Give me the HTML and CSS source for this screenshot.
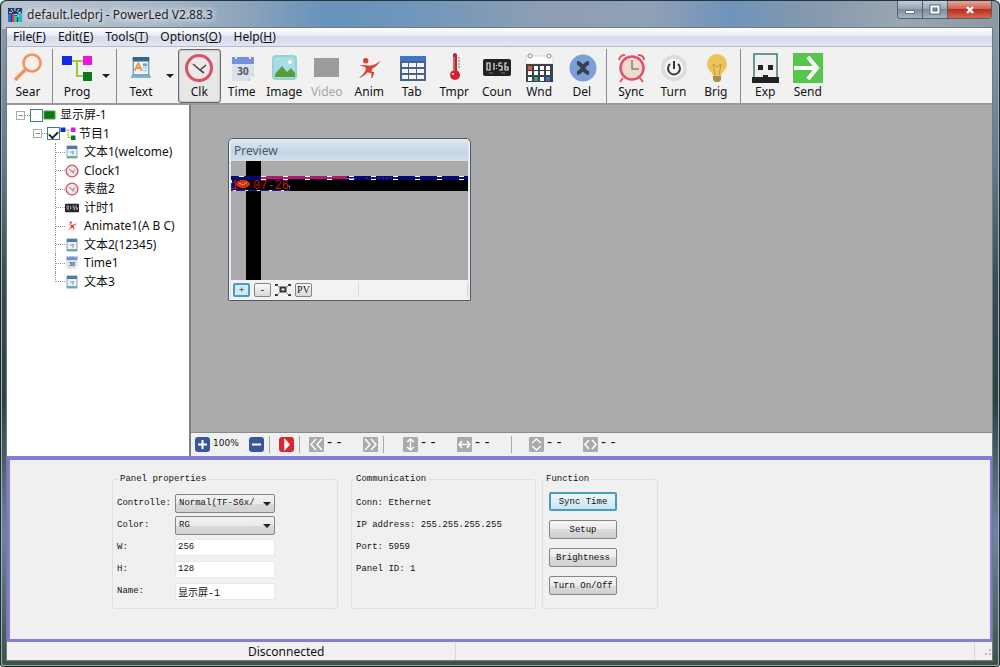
FILE: index.html
```html
<!DOCTYPE html>
<html lang="en">
<head>
<meta charset="utf-8">
<title>default.ledprj - PowerLed V2.88.3</title>
<link rel="stylesheet" href="styles.css">
</head>
<body>
<svg class="defs" aria-hidden="true">
  <symbol id="doc" viewBox="0 0 24 26"><path d="M3 2h18v18l2 4H1l2-4z" fill="#3b78a4"/><path d="M4 6h16v14H4z" fill="#eef6fb"/><path d="M3 1h18v4H3z" fill="#2f6794"/><path d="M2 21h20l1 3H1z" fill="#7fb6d6"/><path d="M5 16l4-8 4 8M7 13h4" fill="none" stroke="#f0963c" stroke-width="2"/><path d="M14 8h5v3h-5z" fill="#6fa6cc"/><path d="M14 13h5M14 16h5" stroke="#88b7d4"/></symbol>
  <symbol id="page" viewBox="0 0 14 14"><path d="M2 1h10v12H2z" fill="#eaf2f6" stroke="#8aa4b8"/><path d="M2 1h10v3H2z" fill="#4a7aae"/><path d="M5 7h4M8 6v4" stroke="#7c9ec8"/><path d="M2 12h10" stroke="#6fae9c" stroke-width="2"/></symbol>
  <symbol id="clock" viewBox="0 0 30 30"><circle cx="15" cy="15" r="12.5" fill="#eee8e8" stroke="#dc5066" stroke-width="3"/><path d="M9 11l7 6 6-5M16 17l4 3" fill="none" stroke="#454b52" stroke-width="1.6"/></symbol>
  <symbol id="calendar" viewBox="0 0 24 26"><path d="M1 1h22v18l-5 6H1z" fill="#dbe0e9"/><path d="M1 1h22v7H1z" fill="#748fdc"/><path d="M5 0v3M19 0v3" stroke="#dfe6ff" stroke-width="2"/><path d="M18 25l1-6h4z" fill="#fff" stroke="#b0b6c0" stroke-width=".6"/><text x="12" y="19" text-anchor="middle" class="cal-text">30</text></symbol>
  <symbol id="counter" viewBox="0 0 28 17"><rect width="28" height="17" rx="2" fill="#202224"/><path d="M4 4h3v7H4zM11 4v7M16 4h3v0M16 4v3h3v4h-3M24 4h-2v7h3V8h-3M13.500 6v1M13.500 9v1" fill="none" stroke="#e8e8e8" stroke-width="1.200"/><path d="M6 14h4M18 14h4" stroke="#777"/></symbol>
  <symbol id="runner" viewBox="0 0 26 26"><circle cx="9" cy="5" r="2.800" fill="#dc4030"/><path d="M2 9l9 1 4 0q5-1 9-5q-2 5-8 8l-1 3 3 1-2 6-1 0 0-5-4-1q-3 4-9 6q5-4 7-8l0-3z" fill="#dc4030"/></symbol>
  <symbol id="prog" viewBox="0 0 30 26"><path d="M10 6h11M15 6v15h6" fill="none" stroke="#a4c83c" stroke-width="2"/><path d="M0 1h10v9H0z" fill="#1428e8"/><path d="M21 1h9v9h-9z" fill="#f014d8"/><path d="M21 17h9v9h-9z" fill="#0a7a18"/></symbol>
</svg>
<div class="window">
  <header class="titlebar">
    <svg class="app-icon" viewBox="0 0 14 14"><path fill="#1e3c64" d="M0 0h14v14H0z"/><path d="M3 1l2 3M7 0v3M11 1L9 4M1 4l3 1M13 4l-3 1" stroke="#cfe4ff"/><path fill="#2e6ae0" d="M0 6h3v8H0z"/><path fill="#d93a54" d="M4 6h2v8H4z"/><path fill="#3dc46a" d="M6 8h3v6H6z"/><path fill="#27b7d2" d="M10 5h4v9h-4z"/><path d="M6 7q4-2 4 2" fill="none" stroke="#fff"/></svg>
    <h1 class="title">default.ledprj - PowerLed V2.88.3</h1>
    <div class="win-buttons">
      <button class="win-btn" aria-label="Minimize"><svg width="12" height="12" viewBox="0 0 12 12"><path d="M1.500 6.500h9v3h-9z" fill="#fff" stroke="#687888"/></svg></button>
      <button class="win-btn" aria-label="Maximize"><svg width="12" height="12" viewBox="0 0 12 12"><path d="M2.500 2.500h7v6h-7z" fill="none" stroke="#5a6878" stroke-width="4"/><path d="M2.500 2.500h7v6h-7z" fill="none" stroke="#fff" stroke-width="2"/></svg></button>
      <button class="win-btn close" aria-label="Close"><svg width="12" height="12" viewBox="0 0 12 12"><path d="M3 3l6 6M9 3L3 9" stroke="#fff" stroke-width="2.400"/></svg></button>
    </div>
  </header>
  <div class="client">
    <nav class="menubar">
      <button class="menu">File(<u>F</u>)</button><button class="menu">Edit(<u>E</u>)</button><button class="menu">Tools(<u>T</u>)</button><button class="menu">Options(<u>O</u>)</button><button class="menu">Help(<u>H</u>)</button>
    </nav>
    <div class="toolbar">
      <div class="group g1">
        <button class="tool"><svg viewBox="0 0 30 30"><circle cx="19" cy="10" r="8.500" fill="#f6f0ec" stroke="#f2925e" stroke-width="2.600"/><path d="M13 16L2 27" stroke="#f2925e" stroke-width="3.400"/></svg>Sear</button>
      </div>
      <span class="sep"></span>
      <div class="group g1">
        <button class="tool"><svg viewBox="0 0 30 30"><use href="#prog" y="2" width="30" height="26"/></svg>Prog</button>
      </div>
      <button class="drop" aria-label="Prog options"></button>
      <span class="sep"></span>
      <div class="group g1">
        <button class="tool"><svg viewBox="0 0 30 30"><use href="#doc" x="4" y="2" width="22" height="26"/></svg>Text</button>
      </div>
      <button class="drop wide" aria-label="Text options"></button>
      <div class="group g10">
        <button class="tool active"><svg viewBox="0 0 30 30"><use href="#clock" width="30" height="30"/></svg>Clk</button>
        <button class="tool"><svg viewBox="0 0 30 30"><use href="#calendar" x="4" y="3" width="24" height="26"/></svg>Time</button>
        <button class="tool"><svg viewBox="0 0 30 30"><rect x="4" y="3" width="23" height="23" rx="3" fill="#a8dde8" stroke="#8fd6cc" stroke-width="2"/><circle cx="21" cy="9" r="2" fill="#fff"/><path d="M6 24v-3l7-8 5 6 4-4 4 5v4z" fill="#5c9b3c"/></svg>Image</button>
        <button class="tool" disabled><svg viewBox="0 0 30 30"><path fill="#9c9c9c" d="M2 5h25v19H2z"/></svg>Video</button>
        <button class="tool"><svg viewBox="0 0 30 30"><use href="#runner" x="3" y="3" width="25" height="25"/></svg>Anim</button>
        <button class="tool"><svg viewBox="0 0 30 30"><path fill="#4c6088" d="M3 3h26v25H3z"/><path fill="#3e74cc" d="M3 3h26v5H3z"/><path fill="#f4f6fa" d="M5 10h6v4H5zM12 10h7v4h-7zM20 10h7v4h-7zM5 16h6v4H5zM12 16h7v4h-7zM20 16h7v4h-7zM5 22h6v4H5zM12 22h7v4h-7zM20 22h7v4h-7z"/></svg>Tab</button>
        <button class="tool"><svg viewBox="0 0 30 30"><path d="M16 2v20" stroke="#bd2432" stroke-width="4" stroke-linecap="round"/><circle cx="16" cy="22" r="5" fill="#d62030"/><path d="M15 4v14" stroke="#f79a98"/><path d="M19 5h2M19 8h2M19 11h2M19 14h2" stroke="#666"/><circle cx="14" cy="21" r="1" fill="#fff"/></svg>Tmpr</button>
        <button class="tool"><svg viewBox="0 0 30 30"><use href="#counter" x="1" y="6" width="28" height="17"/></svg>Coun</button>
        <button class="tool"><svg viewBox="0 0 30 30"><path fill="#fff" stroke="#d8d8d8" d="M2 3h27v8H2z"/><path fill="#39434c" d="M2 11h27v18H2z"/><circle cx="6" cy="3" r="2" fill="#fff" stroke="#888"/><circle cx="25" cy="3" r="2" fill="#fff" stroke="#888"/><path fill="#fff" d="M10 13h4v4h-4zM16 13h4v4h-4zM22 13h4v4h-4zM4 18h4v4H4zM10 18h4v4h-4zM16 18h4v4h-4zM22 18h4v4h-4zM4 24h4v4H4zM16 24h4v4h-4z"/><path fill="#e2543c" d="M4 13h4v4H4z"/><path fill="#32a878" d="M10 24h4v4h-4z"/><path fill="#3f72c8" d="M22 24h4v4h-4z"/></svg>Wnd</button>
        <button class="tool"><svg viewBox="0 0 30 30"><circle cx="16" cy="15" r="13.500" fill="#7d9fd8"/><path d="M10 10q3 0 6 5q3-5 6-5M10 20q3 0 6-5q3 5 6 5" fill="none" stroke="#36414c" stroke-width="4"/></svg>Del</button>
      </div>
      <span class="sep"></span>
      <div class="group g3">
        <button class="tool"><svg viewBox="0 0 30 30"><path d="M3 7q1-5 6-5M22 2q6 0 6 5M7 25l-3 4M24 25l3 4" fill="none" stroke="#e0526c" stroke-width="2"/><circle cx="16" cy="15" r="11.500" fill="#eddbd0" stroke="#e0526c" stroke-width="2.500"/><path d="M16 7v9h7" fill="none" stroke="#8a7f80" stroke-width="1.500"/></svg>Sync</button>
        <button class="tool"><svg viewBox="0 0 30 30"><circle cx="16" cy="15" r="13" fill="#dcdcdc"/><circle cx="16" cy="15" r="9.500" fill="#f4f4f4"/><path d="M12 11a6 6 0 1 0 8 0M16 8v8" fill="none" stroke="#34383c" stroke-width="2"/></svg>Turn</button>
        <button class="tool"><svg viewBox="0 0 30 30"><path d="M16 1a10 10 0 0 1 10 10c0 6-5 7-6 12h-8C11 18 6 17 6 11A10 10 0 0 1 16 1z" fill="#ecc45c"/><path d="M14 22l-2-11 4 3 4-3-2 11" fill="none" stroke="#c6963a"/><path fill="#a98b56" d="M12 23h8v4l-2 2h-4l-2-2z"/></svg>Brig</button>
      </div>
      <span class="sep"></span>
      <div class="group g2">
        <button class="tool"><svg viewBox="0 0 30 30"><path d="M4 1h23v24H4z" fill="#eef0f0" stroke="#3c7874" stroke-width="1.500"/><path fill="#222" d="M8 12h5v5H8zM18 12h5v5h-5zM2 24h27v6H2z"/><path fill="#222" d="M13 22h5v3h-5z"/></svg>Exp</button>
        <button class="tool"><svg viewBox="0 0 30 30"><path fill="#55c84c" d="M0 0h30v30H0z"/><path d="M1 15h22M15 4l9 11-9 11" fill="none" stroke="#fff" stroke-width="4"/></svg>Send</button>
      </div>
    </div>
    <main class="work">
      <ul class="tree">
        <li class="node l1"><span class="expander">−</span><span class="dash"></span><input type="checkbox" class="check" aria-label="显示屏-1"><svg width="13" height="11" viewBox="0 0 13 11"><path fill="#0a7a14" stroke="#4ca050" d="M1 1h11v8H1z"/></svg><span class="name">显示屏-1</span></li>
        <li class="node l2"><span class="expander">−</span><span class="dash"></span><input type="checkbox" class="check" checked aria-label="节目1"><svg width="16" height="13"><use href="#prog" width="16" height="13"/></svg><span class="name">节目1</span></li>
        <li class="node l3"><span class="branch"></span><svg width="14" height="14"><use href="#page" width="14" height="14"/></svg><span class="name">文本1(welcome)</span></li>
        <li class="node l3"><span class="branch"></span><svg width="14" height="14"><use href="#clock" width="14" height="14"/></svg><span class="name">Clock1</span></li>
        <li class="node l3"><span class="branch"></span><svg width="14" height="14"><use href="#clock" width="14" height="14"/></svg><span class="name">表盘2</span></li>
        <li class="node l3"><span class="branch"></span><svg width="14" height="14"><use href="#counter" width="14" height="14"/></svg><span class="name">计时1</span></li>
        <li class="node l3"><span class="branch"></span><svg width="14" height="14"><use href="#runner" x="2" y="1" width="11" height="12"/></svg><span class="name">Animate1(A B C)</span></li>
        <li class="node l3"><span class="branch"></span><svg width="14" height="14"><use href="#page" width="14" height="14"/></svg><span class="name">文本2(12345)</span></li>
        <li class="node l3"><span class="branch"></span><svg width="14" height="14"><use href="#calendar" width="14" height="13"/></svg><span class="name">Time1</span></li>
        <li class="node l3"><span class="branch last"></span><svg width="14" height="14"><use href="#page" width="14" height="14"/></svg><span class="name">文本3</span></li>
      </ul>
      <section class="editor">
        <div class="canvas">
          <div class="preview">
            <h2 class="preview-title">Preview</h2>
            <svg class="screen" viewBox="0 0 237 119">
              <path fill="#ababab" d="M0 0h237v119H0z"/><path d="M15 0h15v119H15zM0 15h237v15H0z"/>
              <path stroke="#070774" stroke-width="4" d="M0 17h237"/><path stroke="#b51c58" stroke-width="3" d="M30 16.500h86"/><path stroke="#4d76ee" d="M116 17.500h8"/>
              <path stroke="#5a309f" stroke-dasharray="2 2" d="M135 17h32"/>
              <path stroke="#fff" stroke-dasharray="5 17" d="M8 15.500h229M8 18.500h229"/>
              <path fill="#080850" d="M0 18h15v12H0z"/>
              <text x="0" y="28" class="led">1</text><text x="22" y="28" class="led">07-26</text>
              <ellipse cx="12" cy="23" rx="7" ry="4" fill="#d83018"/><path d="M8 22l4 2 4-3" stroke="#f4a020" fill="none"/>
              <path fill="none" stroke="#2424a0" d="M.500 19v10.500h58V25"/><path fill="none" stroke="#eee" stroke-dasharray="3 9" d="M.500 19v10.500h58V25"/>
            </svg>
            <div class="preview-bar">
              <button class="pbtn focus">+</button><button class="pbtn">-</button>
              <button class="pfit" aria-label="Fit"><svg width="16" height="14" viewBox="0 0 16 14"><path d="M5.500 4.500h5v4h-5z" fill="none" stroke="#333" stroke-width="2"/><path d="M0 1h3v2H0zM13 1h3v2h-3zM0 11h3v2H0zM13 11h3v2h-3z" fill="#333"/><path d="M2 2l2 2M14 2l-2 2M2 12l2-2M14 12l-2-2" stroke="#777"/></svg></button>
              <button class="pbtn">PV</button>
              <span class="pcell"></span>
            </div>
          </div>
        </div>
        <div class="zoombar">
          <button class="zi blue" aria-label="Zoom in"><svg viewBox="0 0 15 15"><path d="M7.500 3v9M3 7.500h9"/></svg></button><span class="field pct">100%</span>
          <button class="zi blue" aria-label="Zoom out"><svg viewBox="0 0 15 15"><path d="M3 7.500h9"/></svg></button>
          <span class="zsep"></span>
          <button class="zi red" aria-label="Play"><svg viewBox="0 0 15 15"><path d="M6 3l4 4.500L6 12z" fill="#fff"/></svg></button>
          <span class="zsep"></span>
          <button class="zi" aria-label="Previous"><svg viewBox="0 0 15 15"><path d="M7 2L2 7.500 7 13M13 2L8 7.500l5 5.500"/></svg></button><span class="field">- -</span>
          <button class="zi" aria-label="Next"><svg viewBox="0 0 15 15"><path d="M2 2l5 5.500L2 13M8 2l5 5.500L8 13"/></svg></button>
          <span class="zsep far"></span>
          <button class="zi" aria-label="Vertical move"><svg viewBox="0 0 15 15"><path d="M7.500 2v11M4 5l3.500-3L11 5M4 10l3.500 3 3.500-3"/></svg></button><span class="field">- -</span>
          <button class="zi" aria-label="Horizontal move"><svg viewBox="0 0 15 15"><path d="M2 7.500h11M5 4L2 7.500 5 11M10 4l3 3.500-3 3.500"/></svg></button><span class="field">- -</span>
          <span class="zsep after"></span>
          <button class="zi" aria-label="Height"><svg viewBox="0 0 15 15"><path d="M3 6l4.500-4L12 6M3 9l4.500 4L12 9"/></svg></button><span class="field">- -</span>
          <button class="zi" aria-label="Width"><svg viewBox="0 0 15 15"><path d="M6 3L2 7.500 6 12M9 3l4 4.500L9 12"/></svg></button><span class="field">- -</span>
        </div>
      </section>
    </main>
    <section class="panel">
      <fieldset class="box props">
        <legend>Panel properties</legend>
        <div class="form">
          <label for="ctl">Controlle:</label><span class="pick"><select id="ctl"><option>Normal(TF-S6x/</option></select></span>
          <label for="col">Color:</label><span class="pick"><select id="col"><option>RG</option></select></span>
          <label for="w">W:</label><input id="w" type="text" value="256">
          <label for="h">H:</label><input id="h" type="text" value="128">
          <label for="nm">Name:</label><input id="nm" type="text" value="显示屏-1">
        </div>
      </fieldset>
      <fieldset class="box comm">
        <legend>Communication</legend>
        <p>Conn: Ethernet</p><p>IP address: 255.255.255.255</p><p>Port: 5959</p><p>Panel ID: 1</p>
      </fieldset>
      <fieldset class="box func">
        <legend>Function</legend>
        <div class="actions"><button class="act primary">Sync Time</button><button class="act">Setup</button><button class="act">Brightness</button><button class="act">Turn On/Off</button></div>
      </fieldset>
    </section>
    <footer class="status"><span class="state">Disconnected</span><span class="cell"></span><span class="grip"></span></footer>
  </div>
</div>
</body>
</html>
```
FILE: styles.css
```css
* { box-sizing: border-box; }
body { margin: 0; color: #111; font: 12px/18px "Noto Sans", "Noto Sans CJK SC", sans-serif; }
button, input, select { font: inherit; color: inherit; margin: 0; padding: 0; }
button { border: 0; background: none; }
svg { flex: none; display: block; }
.defs { display: none; }

.window {
  height: 100vh; min-height: 560px; display: flex; flex-direction: column;
  padding: 0 8px 7px 7px; border: 1px solid #26343c; border-width: 1px 0 0;
  border-radius: 6px 6px 4px 4px;
  background: linear-gradient(90deg, #b9c4d0 0, #aab9c8 15%, #8da5bc 24%, #6792ba 33%, #7197bb 42%, #8e9fb3 55%, #8fa1b5 65%, #6f94bb 73%, #8298ae 80%, #9aa6b0 90%, #8c98a2 100%) 0 0 / 100% 28px no-repeat,
    linear-gradient(180deg, #8fa0ae 0, #667887 25%, #3d4b52 42%, #31403f 60%, #6f84a4 80%, #3c5142 100%);
  box-shadow: inset 1px 0 #1e2c30, inset 2px 0 #9badb8, inset -1px 0 #1e2c30, inset -2px 0 #9badb8, inset 0 -1px #16221c, inset 0 -2px #8fa79c;
}
.titlebar { height: 27px; flex: none; display: flex; align-items: center; padding-left: 1px; }
.app-icon { width: 14px; height: 14px; }
.title { flex: 1; margin: 0 0 0 5px; font-size: 12px; line-height: 16px; font-weight: 400; color: #1c2228; text-shadow: 0 0 6px #fff, 0 0 6px #fff; }
.win-buttons { align-self: flex-start; display: flex; border: 1px solid #51606e; border-top: 0; border-radius: 0 0 4px 4px; overflow: hidden; }
.win-btn { width: 25px; height: 17px; display: grid; place-items: center; border-right: 1px solid #51606e; background: linear-gradient(#c4cdd6, #93a1af 50%, #7c8c9d 50%, #a8b6c2); }
.win-btn.close { width: 43px; border-right: 0; background: linear-gradient(#e3a89c, #cd5a48 50%, #b82c1c 50%, #d66a50); }

.client { flex: 1; min-height: 0; display: flex; flex-direction: column; background: #f0f0f0; outline: 1px solid #6e7c86; }
.menubar { height: 19px; flex: none; display: flex; padding-left: 6px; gap: 12px; background: linear-gradient(#fff, #eceff7 35%, #d6dcec 50%, #dfe4f2 90%); border-bottom: 1px solid #b6bccb; }
.menu { line-height: 18px; }
.toolbar { height: 58px; flex: none; display: flex; align-items: stretch; padding: 2px 0 0; background: #f1f1f1; border-bottom: 2px solid #9a9a9a; }
.group { display: flex; flex: none; }
.g1 { width: 42px; }
.g10 { width: 425px; }
.g3 { width: 127px; }
.g2 { width: 85px; }
.tool { flex: 1 1 0; min-width: 0; display: flex; flex-direction: column; align-items: center; justify-content: space-between; padding: 3px 0 2px; border: 1px solid transparent; border-radius: 3px; line-height: 16px; white-space: nowrap; }
.tool svg { width: 30px; height: 30px; }
.tool.active { border-color: #6a6a6a; background: #e9e8e8; box-shadow: inset 0 0 2px #888; }
.tool:disabled { color: #a6a6a6; }
.sep { width: 1px; flex: none; margin: 0 3px; background: #8c8c8c; }
.drop { width: 15px; flex: none; display: grid; place-items: center; }
.drop.wide { width: 16px; }
.drop::after { content: ""; border: 4px solid transparent; border-top-color: #222; border-bottom: 0; }
.cal-text { font: 700 10px "Noto Sans", sans-serif; fill: #4a5668; }

.work { flex: 1; min-height: 0; display: flex; }
.tree { width: 182px; flex: none; margin: 0; padding: 1px 0 0 9px; list-style: none; background: #fff; }
.node { height: 19px; display: flex; align-items: center; white-space: nowrap; }
.node:nth-child(odd) { height: 18px; }
.l2 { padding-left: 17px; }
.l3 { padding-left: 39px; }
.expander { width: 9px; height: 9px; border: 1px solid #aaa; color: #555; font-size: 9px; line-height: 7px; text-align: center; }
.dash { width: 5px; border-top: 1px dotted #999; }
.check { appearance: none; width: 13px; height: 13px; margin: 0; border: 1px solid #3c7f8c; background: #fff; display: grid; place-items: center; }
.check:checked::after { content: ""; width: 7px; height: 4px; border: solid #222; border-width: 0 0 2px 2px; rotate: -45deg; }
.name { margin-left: 4px; }
.l2 .name { margin-left: 3px; }
.l3 .name { margin-left: 5px; }
.branch { width: 10px; align-self: stretch; display: flex; align-items: center; border-left: 1px dotted #999; }
.branch::after { content: ""; flex: 1; border-top: 1px dotted #999; }
.branch.last { align-self: flex-start; height: 10px; align-items: flex-end; }

.editor { flex: 1; min-width: 0; display: flex; flex-direction: column; border-left: 2px solid #808080; }
.canvas { flex: 1; position: relative; background: #ababab; border-bottom: 1px solid #8a8a8a; }
.preview { position: absolute; left: 37px; top: 33px; width: 243px; border: 1px solid #4e5a66; border-radius: 5px 5px 1px 1px; padding: 0 2px 1px; background: #dbe6f1; box-shadow: inset 0 0 0 1px #eef4f9; }
.preview-title { margin: 0; padding: 3px 0 0 3px; height: 22px; font-size: 12px; font-weight: 400; line-height: 18px; color: #47586c; background: linear-gradient(#dde8f1, #c5d5e5 60%, #d3e1ee); }
.screen { width: 100%; height: auto; }
.led { font: 12px "Liberation Mono", monospace; fill: #c41818; }
.preview-bar { height: 19px; display: flex; align-items: center; gap: 4px; padding-left: 2px; background: #f3f1f1; }
.pbtn { width: 17px; height: 14px; border: 1px solid #858585; border-radius: 2px; background: linear-gradient(#fafafa, #d9d9d9); font: 10px/12px "Liberation Serif", serif; }
.pbtn.focus { border: 2px solid #4b9cba; background: #cfeaf6; line-height: 10px; }
.pcell { flex: 1; align-self: stretch; margin: 2px 0 2px 42px; border: 1px solid #dcdcdc; border-width: 0 1px; }

.zoombar { height: 23px; flex: none; display: flex; align-items: center; padding-left: 4px; background: #f1f0f1; }
.zi { width: 15px; height: 15px; flex: none; background: #aaa; border-radius: 1px; }
.zi svg { width: 15px; height: 15px; fill: none; stroke: #fff; stroke-width: 1.5; }
.zi.blue { background: #3a559e; border-radius: 3px; }
.zi.blue svg { stroke-width: 2; }
.zi.red { background: #d92632; border-radius: 3px; }
.field { width: 39px; flex: none; padding: 0 0 5px 3px; font: 14px/12px "DejaVu Sans", sans-serif; }
.field.pct { font-size: 9px; padding-bottom: 3px; }
.zsep { width: 1px; height: 17px; flex: none; margin: 0 9px 0 5px; background: #aaa; }
.zsep.far { margin-right: 19px; }
.zsep.after { margin: 0 17px 0 0; }

.panel { flex: none; height: 186px; display: flex; align-items: flex-start; margin-right: -1px; padding: 13px 0 0 102px; border: 3px solid #817ed6; border-top-width: 4px; background: #f0f0f0; font: 9px/12px "Liberation Mono", "Noto Sans CJK SC", monospace; }
.box { height: 136px; min-width: 0; margin: 0; padding: 0 4px; border: 1px solid #e0e0e0; border-radius: 3px; }
.box legend { height: 12px; padding: 0 2px; }
.props { width: 226px; margin-right: 13px; }
.comm { width: 185px; margin-right: 6px; }
.func { width: 116px; }
.props legend { margin-left: 1px; }
.comm legend { margin-left: -2px; }
.func legend { margin-left: -3px; }
.form { display: grid; grid-template-columns: 54px 100px; column-gap: 4px; grid-auto-rows: 22px; align-items: center; padding-top: 7px; }
.form label { white-space: nowrap; }
.pick { position: relative; display: block; height: 19px; }
.pick::after { content: ""; position: absolute; right: 4px; top: 8px; border: 4px solid transparent; border-top-color: #222; border-bottom: 0; pointer-events: none; }
.pick select { appearance: none; width: 100%; height: 19px; padding: 0 14px 0 3px; border: 1px solid #858585; border-radius: 2px; background: linear-gradient(#f3f3f3, #e9e9e9 50%, #dadada 50%, #d2d2d2); }
.form input { width: 100%; height: 17px; padding: 0 2px; border: 1px solid #e8e8ea; background: #fff; }
#nm { font-size: 10px; }
.comm p { margin: 0; height: 22px; }
.comm legend + p { margin-top: 12px; }
.actions { display: grid; gap: 9px; padding: 7px 0 0 2px; width: 70px; }
.act { height: 19px; border: 1px solid #858585; border-radius: 2px; background: linear-gradient(#f5f5f5, #ebebeb 50%, #dcdcdc 50%, #d0d0d0); white-space: nowrap; }
.act.primary { border: 2px solid #4b9cba; background: linear-gradient(#eef7fb, #c8e4f0); }

.status { height: 18px; flex: none; display: flex; align-items: stretch; background: #f1eff1; line-height: 20px; }
.state { width: 449px; padding-left: 241px; border-right: 1px solid #d8d8d8; }
.cell { flex: 1; border-right: 1px solid #d8d8d8; }
.grip { width: 17px; background: radial-gradient(circle, #bbb 1px, transparent 1px) 9px 10px / 4px 4px no-repeat, radial-gradient(circle, #bbb 1px, transparent 1px) 13px 6px / 4px 4px no-repeat, radial-gradient(circle, #bbb 1px, transparent 1px) 13px 10px / 4px 4px no-repeat; }
```
